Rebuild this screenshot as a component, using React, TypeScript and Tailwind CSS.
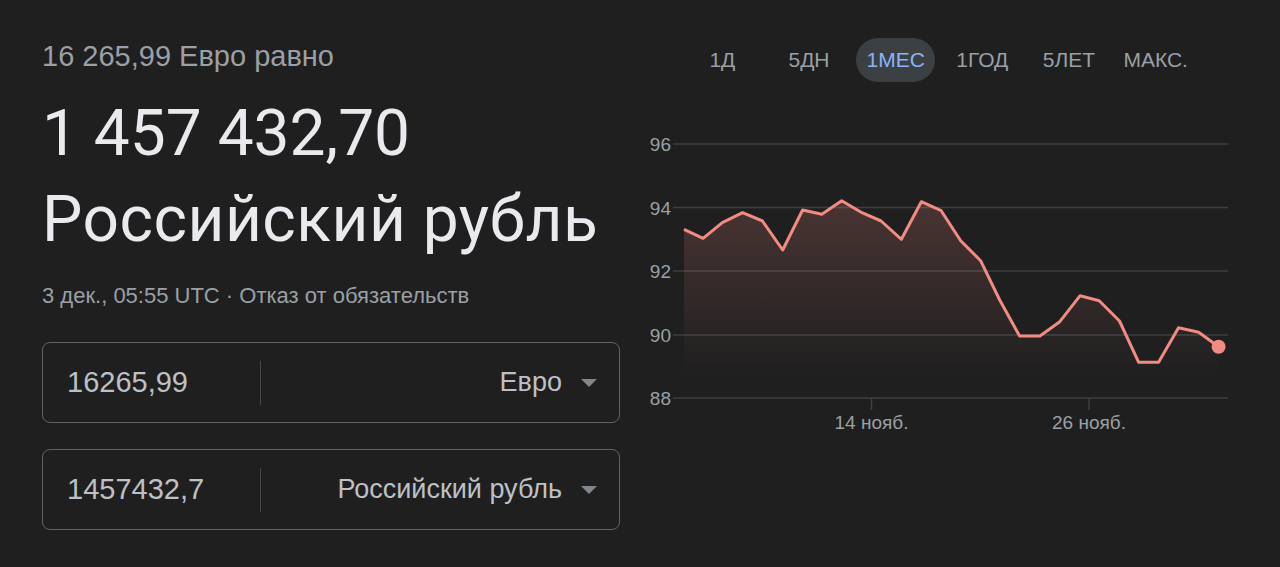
import React from 'react';

const tabs = ['1Д', '5ДН', '1МЕС', '1ГОД', '5ЛЕТ', 'МАКС.'];

// close prices for the last month, in page pixels
const points: [number, number][] = [
  [684, 229.3], [703.1, 238.3], [722.3, 222.7], [742.6, 212.7], [762.5, 221],
  [782.7, 250], [802.6, 210], [821.8, 214.3], [841.7, 200.7], [862, 212.7],
  [881.1, 221], [901.4, 239.3], [921.3, 201.7], [941.2, 210.7], [960.7, 240.7],
  [980.6, 260.7], [999.7, 300], [1019.6, 336], [1039.9, 336], [1059.8, 321.7],
  [1080.1, 295.7], [1099.2, 300.7], [1119.5, 321], [1138.7, 362.3], [1158.6, 362.3],
  [1178.5, 327.7], [1198.7, 332.3], [1218.6, 346.7],
];

const grid = [
  { label: '96', y: 144 },
  { label: '94', y: 207.5 },
  { label: '92', y: 271 },
  { label: '90', y: 335 },
  { label: '88', y: 398 },
];

const Caret = () => (
  <svg width="16" height="8" viewBox="0 0 16 8" className="shrink-0">
    <path d="M0 0 L16 0 L8 8 Z" fill="#80868b" />
  </svg>
);

const ConverterRow = ({ value, currency }: { value: string; currency: string }) => (
  <div className="flex h-[81px] items-center rounded-[8px] border border-[#5f6368]">
    <div className="flex w-[217px] items-center pl-[24px] text-[29px] text-[#bdc1c6]">{value}</div>
    <div className="h-[44px] w-px bg-[#45484c]" />
    <div className="flex flex-1 items-center justify-end gap-[19px] pr-[22px] text-[27px] text-[#bdc1c6]">
      <span>{currency}</span>
      <Caret />
    </div>
  </div>
);

const Chart = () => {
  const line = points.map(([x, y], i) => `${i ? 'L' : 'M'}${x} ${y}`).join(' ');
  const area = `${line} L1218.6 377 L684 377 Z`;
  return (
    <svg width="600" height="320" viewBox="640 120 600 320" className="block">
      <defs>
        <linearGradient id="fade" x1="0" y1="200" x2="0" y2="377" gradientUnits="userSpaceOnUse">
          <stop offset="0" stopColor="#f28b82" stopOpacity="0.2" />
          <stop offset="1" stopColor="#f28b82" stopOpacity="0" />
        </linearGradient>
      </defs>
      {grid.map((g) => (
        <g key={g.label}>
          <line x1="673" x2="1228" y1={g.y} y2={g.y} stroke="#3c4043" strokeWidth="1.5" />
          <text x="671" y={g.y + 7} textAnchor="end" fill="#9aa0a6" fontSize="19" fontFamily="'Liberation Sans', Arial, sans-serif">
            {g.label}
          </text>
        </g>
      ))}
      <path d={area} fill="url(#fade)" />
      <path d={line} fill="none" stroke="#f28b82" strokeWidth="3" strokeLinejoin="round" />
      <circle cx="1218.6" cy="346.7" r="7" fill="#f28b82" />
      {[
        { x: 871.5, label: '14 нояб.' },
        { x: 1089, label: '26 нояб.' },
      ].map((t) => (
        <g key={t.label}>
          <line x1={t.x} x2={t.x} y1="398" y2="410" stroke="#3c4043" strokeWidth="1.5" />
          <text x={t.x} y="429" textAnchor="middle" fill="#9aa0a6" fontSize="19" fontFamily="'Liberation Sans', Arial, sans-serif">
            {t.label}
          </text>
        </g>
      ))}
    </svg>
  );
};

export default function App() {
  return (
    <div className="flex h-[567px] w-full bg-[#1f1f1f] pl-[42px] font-['Liberation_Sans',Arial,sans-serif]">
      <div className="flex w-[578px] flex-col pt-[40px]">
        <div className="text-[29px] leading-[32px] text-[#9aa0a6]">16 265,99 Евро равно</div>
        <div className="mt-[19px] font-['Roboto',sans-serif] text-[64px] leading-[86px] text-[#e8eaed]">
          <div>1 457 432,70</div>
          <div className="tracking-[0.5px]">Российский рубль</div>
        </div>
        <div className="mt-[21px] text-[22px] leading-[24px] text-[#9aa0a6]">
          3 дек., 05:55 UTC · Отказ от обязательств
        </div>
        <div className="mt-[34px] flex flex-col gap-[26px]">
          <ConverterRow value="16265,99" currency="Евро" />
          <ConverterRow value="1457432,7" currency="Российский рубль" />
        </div>
      </div>
      <div className="ml-[20px] flex w-[600px] flex-col pt-[38px]">
        <div className="ml-[39px] grid w-[520px] grid-cols-6">
          {tabs.map((t) => (
            <div key={t} className="flex h-[44px] items-center justify-center">
              <span
                className={
                  t === '1МЕС'
                    ? 'flex h-[44px] w-[79px] items-center justify-center rounded-full bg-[#3c4043] text-[21px] text-[#8ab4f8]'
                    : 'text-[21px] text-[#9aa0a6]'
                }
              >
                {t}
              </span>
            </div>
          ))}
        </div>
        <div className="mt-[38px]">
          <Chart />
        </div>
      </div>
    </div>
  );
}
